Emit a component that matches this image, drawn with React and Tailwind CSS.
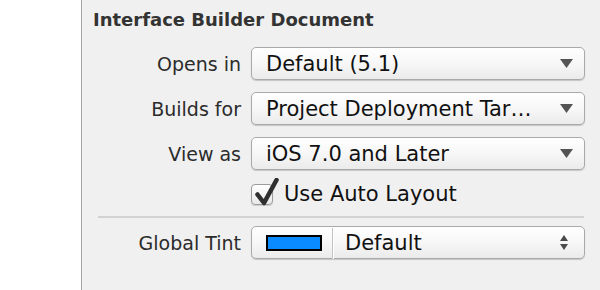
const font = { fontFamily: '"DejaVu Sans", Verdana, sans-serif' }

function Arrow() {
  return (
    <svg width="13" height="9" viewBox="0 0 13 9" className="shrink-0">
      <path d="M0 0 H13 L6.5 9 Z" fill="#545454" />
    </svg>
  )
}

function UpDown() {
  return (
    <svg width="8" height="15" viewBox="0 0 8 15" className="shrink-0">
      <path d="M4 0 L8 6 H0 Z" fill="#4a4a4a" />
      <path d="M0 9 H8 L4 15 Z" fill="#4a4a4a" />
    </svg>
  )
}

function Popup({ children, stepper = false, className = '' }) {
  return (
    <div
      className={`flex h-[33px] w-[334px] items-center rounded-[5px] border border-[#a9a9a9] bg-gradient-to-b from-white via-[#f7f7f7] to-[#ebebeb] shadow-[0_1px_1px_rgba(0,0,0,0.18)] ${className}`}
    >
      <div className="flex min-w-0 flex-1 items-center pt-[1px] text-[21px] leading-[24px] text-[#111]">
        {children}
      </div>
      <div className="flex w-[24px] justify-start pr-[11px]">{stepper ? <UpDown /> : <Arrow />}</div>
    </div>
  )
}

function Row({ label, children }) {
  return (
    <div className="flex items-center gap-[10px]">
      <div className="w-[148px] pt-[1px] text-right text-[19px] leading-[22px] text-[#2b2b2b]">{label}</div>
      {children}
    </div>
  )
}

export default function App() {
  return (
    <div className="flex h-[290px] w-[600px] overflow-hidden" style={font}>
      <div className="w-[81px] shrink-0 bg-white" />
      <div className="flex-1 border-l border-[#a3a3a3] bg-[#f0f0f0] pl-[11px] pt-[9px]">
        <h2 className="text-[18px] font-bold leading-[22px] text-[#333]">Interface Builder Document</h2>

        <div className="mt-[16px] flex flex-col gap-[12px]">
          <Row label="Opens in">
            <Popup>
              <span className="pl-[14px]">Default (5.1)</span>
            </Popup>
          </Row>
          <Row label="Builds for">
            <Popup>
              <span className="truncate pl-[14px]">Project Deployment Tar…</span>
            </Popup>
          </Row>
          <Row label="View as">
            <Popup>
              <span className="pl-[14px]">iOS 7.0 and Later</span>
            </Popup>
          </Row>
        </div>

        <div className="ml-[158px] mt-[12px] flex items-center gap-[11px]">
          <div className="relative h-[21px] w-[22px] shrink-0 rounded-[4px] border border-[#9c9c9c] bg-gradient-to-b from-white to-[#e9e9e9] shadow-[0_1px_1px_rgba(0,0,0,0.15)]">
            <svg width="26" height="30" viewBox="0 0 26 30" className="absolute left-[1px] top-[-7px]">
              <path d="M4.5 16.5 L11 25 L23.5 2" fill="none" stroke="#2f2f2f" strokeWidth="4.5" strokeLinecap="round" strokeLinejoin="round" />
            </svg>
          </div>
          <span className="text-[21px] leading-[24px] text-[#111]">Use Auto Layout</span>
        </div>

        <div className="ml-[5px] mt-[10px] h-[2px] w-[486px] bg-[#d2d2d2]" />

        <div className="mt-[8px]">
          <Row label="Global Tint">
            <Popup stepper>
              <div className="ml-[14px] h-[16px] w-[56px] shrink-0 border-2 border-black bg-[#0a8bff]" />
              <div className="ml-[10px] h-[31px] w-[2px] shrink-0 border-l border-[#c3c3c3] bg-white" />
              <span className="pl-[11px]">Default</span>
            </Popup>
          </Row>
        </div>
      </div>
    </div>
  )
}
